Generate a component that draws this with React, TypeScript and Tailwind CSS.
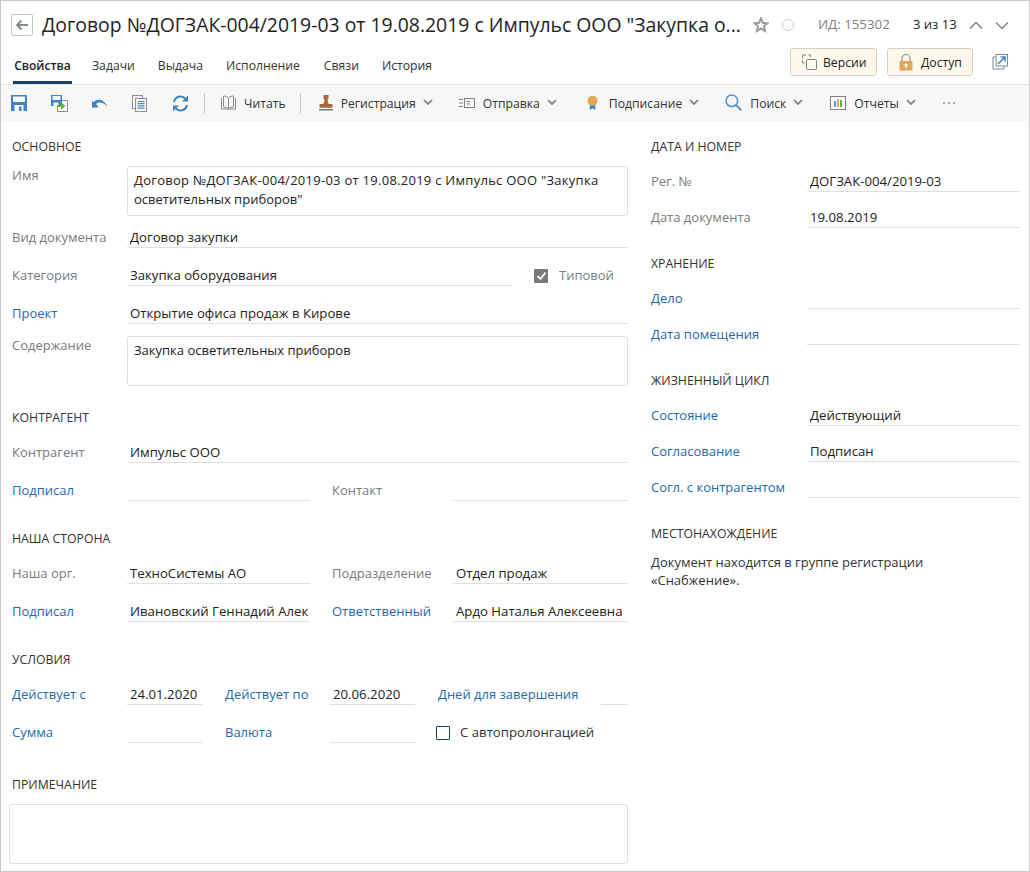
import React from "react";

const Chev = ({ className = "" }: { className?: string }) => (
  <svg width="10" height="7" viewBox="0 0 10 7" className={className}>
    <path d="M1 1.2 L5 5 L9 1.2" fill="none" stroke="#7d8790" strokeWidth="1.8" />
  </svg>
);

const Heading = ({ children, className = "" }: { children: React.ReactNode; className?: string }) => (
  <div className={`h-5 text-[12.3px] leading-[22px] text-[#333] ${className}`}>{children}</div>
);

const Label = ({ children, link, className = "" }: { children: React.ReactNode; link?: boolean; className?: string }) => (
  <div className={`shrink-0 whitespace-nowrap leading-[19px] mb-px ${link ? "text-[#1e6aa8]" : "text-[#7b7b7b]"} ${className}`}>{children}</div>
);

const Val = ({ children, className = "" }: { children?: React.ReactNode; className?: string }) => (
  <div className={`h-7 shrink-0 border-b border-[#e0e0e4] pl-[3px] pt-[8px] leading-[19px] text-[13.2px] text-[#222] whitespace-nowrap ${className}`}>{children}</div>
);

const Box = ({ children, className = "" }: { children?: React.ReactNode; className?: string }) => (
  <div className={`rounded-[3px] border border-[#dfdfe3] px-[6px] py-[4px] leading-[19px] text-[#222] ${className}`}>{children}</div>
);

const Row = ({ children, className = "" }: { children: React.ReactNode; className?: string }) => (
  <div className={`flex items-end h-7 ${className}`}>{children}</div>
);

const Tool = ({ icon, text, chev, gap, className = "" }: { icon: React.ReactNode; text: string; chev?: boolean; gap: string; className?: string }) => (
  <div className={`flex items-center text-[12.2px] text-[#333] ${className}`}>
    {icon}
    <span className={`pt-[2px] ${gap}`}>{text}</span>
    {chev && <Chev className="ml-[7px]" />}
  </div>
);

export default function App() {
  return (
    <div
      className="w-[1030px] h-[872px] overflow-hidden border border-[#c8c8c8] bg-white text-[13px] flex flex-col"
      style={{ fontFamily: '"Open Sans", "Noto Sans", sans-serif' }}
    >
      {/* Title bar */}
      <div className="h-[35px] shrink-0 flex items-center pt-[13px]">
        <div className="ml-[10px] w-[22px] h-[22px] border border-[#c4c4c4] rounded-[2px] flex items-center justify-center">
          <svg width="14" height="12" viewBox="0 0 14 12">
            <path d="M13 6 H2 M6.5 1.5 L2 6 L6.5 10.5" fill="none" stroke="#7f8890" strokeWidth="1.8" />
          </svg>
        </div>
        <div className="ml-[9px] w-[704px] text-[19.4px] leading-6 text-[#1f1f1f] whitespace-nowrap">
          Договор №ДОГЗАК-004/2019-03 от 19.08.2019 с Импульс ООО "Закупка о...
        </div>
        <svg width="16" height="16" viewBox="0 0 16 16" className="ml-[7px]">
          <path d="M8 1.6 L9.9 5.8 L14.4 6.3 L11 9.3 L12 13.9 L8 11.5 L4 13.9 L5 9.3 L1.6 6.3 L6.1 5.8 Z" fill="none" stroke="#9a9a9a" strokeWidth="2" />
        </svg>
        <div className="ml-[13px] w-[12px] h-[12px] rounded-full border border-[#c8d0d8]" />
        <div className="ml-[24px] w-[72px] text-[13.3px] whitespace-nowrap text-[#7f7f7f]">ИД: 155302</div>
        <div className="ml-[23px] w-[44px] whitespace-nowrap text-[#222]">3 из 13</div>
        <svg width="14" height="9" viewBox="0 0 14 9" className="ml-[12px]">
          <path d="M1 7.5 L7 1.5 L13 7.5" fill="none" stroke="#7d8790" strokeWidth="1.5" />
        </svg>
        <svg width="14" height="9" viewBox="0 0 14 9" className="ml-[12px]">
          <path d="M1 1.5 L7 7.5 L13 1.5" fill="none" stroke="#7d8790" strokeWidth="1.5" />
        </svg>
      </div>

      {/* Tabs */}
      <div className="h-[49px] shrink-0 flex items-start border-b border-[#e3e3e3]">
        <div className="flex ml-[12px] mt-[12px] h-[36px] text-[12.2px] text-[#333]">
          <div className="h-[36px] w-[59px] text-center leading-[36px] font-semibold text-[12px] text-[#222] border-b-[3px] border-[#17416d]">Свойства</div>
          <div className="ml-[20px] leading-[36px]">Задачи</div>
          <div className="ml-[23px] leading-[36px]">Выдача</div>
          <div className="ml-[23px] leading-[36px]">Исполнение</div>
          <div className="ml-[24px] leading-[36px]">Связи</div>
          <div className="ml-[23px] leading-[36px]">История</div>
        </div>
        <div className="ml-auto flex items-center mt-[12px] mr-[21px] text-[12.2px]">
          <div className="w-[87px] h-[28px] rounded-[3px] border border-[#d6d2c6] bg-[#fef9ec] flex items-center pl-[10px] text-[#222]">
            <svg width="17" height="16" viewBox="0 0 17 16">
              <path d="M1.5 4.5 V1 H5 M7.5 1 H9.5 V3 M1.5 6.5 V9 H3.5" fill="none" stroke="#7d8288" />
              <rect x="5.5" y="5.5" width="10" height="10" rx="1" fill="none" stroke="#7d8288" />
            </svg>
            <span className="ml-[5px] pt-[2px]">Версии</span>
          </div>
          <div className="ml-[10px] w-[86px] h-[28px] rounded-[3px] border border-[#d6d2c6] bg-[#fef9ec] flex items-center pl-[11px] text-[#222]">
            <svg width="14" height="17" viewBox="0 0 14 17">
              <path d="M3 8 V4.5 A4 4 0 0 1 11 4.5 V8" fill="none" stroke="#9a958a" strokeWidth="1.2" />
              <rect x="0.5" y="7" width="13" height="9.5" fill="#e0a95a" />
              <circle cx="7" cy="11" r="1.5" fill="#fff" />
              <rect x="6.4" y="11" width="1.2" height="3" fill="#fff" />
            </svg>
            <span className="ml-[8px] pt-[2px]">Доступ</span>
          </div>
          <svg width="16" height="16" viewBox="0 0 16 16" className="ml-[19px]">
            <path d="M3.5 3 H1 V15 H12 V12.5" fill="none" stroke="#7f8890" />
            <rect x="4" y="0.5" width="11.5" height="11.5" fill="none" stroke="#7f8890" />
            <path d="M6 10 L12.5 3.5 M8.5 3 H13 V7.5" fill="none" stroke="#3f86c5" strokeWidth="1.6" />
          </svg>
        </div>
      </div>

      {/* Toolbar */}
      <div className="h-[36px] shrink-0 bg-[#f7f7f7] flex items-center pl-[10px]">
        <svg width="16" height="16" viewBox="0 0 16 16">
          <path d="M0 0 H16 V16 H0 Z" fill="#4382bd" />
          <rect x="2" y="1.5" width="12" height="5.5" fill="#f5f8fb" />
          <rect x="3.5" y="10" width="9" height="6" fill="#f5f8fb" />
          <rect x="8" y="11.5" width="2.5" height="4.5" fill="#4382bd" />
        </svg>
        <svg width="17" height="17" viewBox="0 0 17 17" className="ml-[24px]">
          <rect x="6.5" y="5.5" width="10" height="11" fill="#fff" stroke="#8b9096" />
          <path d="M0 0 H11 V11 H0 Z" fill="#4382bd" />
          <rect x="1.5" y="1" width="8" height="4" fill="#f5f8fb" />
          <rect x="2.5" y="7.5" width="5" height="3.5" fill="#f5f8fb" />
          <path d="M6 10 H10 V7.2 L14.5 11 L10 14.8 V12 H6 Z" fill="#6bb02f" />
        </svg>
        <svg width="17" height="10" viewBox="0 0 17 10" className="ml-[23px]">
          <path d="M1 6 C4 1 11 -1 16.5 8.5 C12 4 8 3.5 5 6 L7.5 9 H1 Z" fill="#3d7fbb" />
          <path d="M1 3 V9.5 H7.5 Z" fill="#3d7fbb" />
        </svg>
        <svg width="15" height="17" viewBox="0 0 15 17" className="ml-[24px]">
          <rect x="0.5" y="0.5" width="10" height="13" fill="none" stroke="#8b9096" />
          <rect x="3.5" y="3.5" width="11" height="13" fill="#fafafa" stroke="#8b9096" />
          <path d="M5.5 6.5 H12.5 M5.5 8.7 H12.5 M5.5 10.9 H12.5 M5.5 13.1 H12.5" stroke="#4382bd" strokeWidth="1.2" />
        </svg>
        <svg width="17" height="17" viewBox="0 0 17 17" className="ml-[25px]">
          <path d="M2 7 A6.6 6.6 0 0 1 13.5 3.8" fill="none" stroke="#4382bd" strokeWidth="2" />
          <path d="M16 0.5 V6.5 H10 Z" fill="#4382bd" />
          <path d="M15 10 A6.6 6.6 0 0 1 3.5 13.2" fill="none" stroke="#4382bd" strokeWidth="2" />
          <path d="M1 16.5 V10.5 H7 Z" fill="#4382bd" />
        </svg>
        <div className="ml-[15px] w-px h-[20px] bg-[#c4c4c4]" />
        <Tool
          className="ml-[16px]"
          gap="ml-[8px]"
          icon={
            <svg width="15" height="15" viewBox="0 0 15 15">
              <path d="M7.5 3 C6 1.5 4 1 2.5 1 V12 C4 12 6 12.5 7.5 14 C9 12.5 11 12 12.5 12 V1 C11 1 9 1.5 7.5 3 Z M7.5 3 V14" fill="none" stroke="#8b8b8b" />
              <path d="M1 3 H0.5 V14 H7.5 H14.5 V3 H14" fill="none" stroke="#8b8b8b" />
            </svg>
          }
          text="Читать"
        />
        <div className="ml-[14px] w-px h-[20px] bg-[#c4c4c4]" />
        <Tool
          className="ml-[18px]"
          gap="ml-[8px]"
          icon={
            <svg width="14" height="16" viewBox="0 0 14 16">
              <path d="M4.5 0 H9.5 V4 H8.6 C8.6 7 9 8 10 9 H13.5 V12.8 H0.5 V9 H4 C5 8 5.4 7 5.4 4 H4.5 Z" fill="#a5693b" />
              <rect x="0" y="14" width="14" height="1.6" fill="#7f7f7f" />
            </svg>
          }
          text="Регистрация"
          chev
        />
        <Tool
          className="ml-[26px]"
          gap="ml-[8px]"
          icon={
            <svg width="16" height="10" viewBox="0 0 16 10">
              <rect x="5.5" y="0.5" width="10" height="9" fill="none" stroke="#7d8288" />
              <path d="M0 1.5 H4 M0 5 H4 M0 8.5 H4 M7.5 3.5 H11 M7.5 6 H11" stroke="#7d8288" />
            </svg>
          }
          text="Отправка"
          chev
        />
        <Tool
          className="ml-[30px]"
          gap="ml-[11px]"
          icon={
            <svg width="11" height="16" viewBox="0 0 12 16">
              <path d="M3 9 V16 L6 13.8 L9 16 V9 Z" fill="#3f86c5" />
              <circle cx="6" cy="5.5" r="5.5" fill="#e0a95a" />
            </svg>
          }
          text="Подписание"
          chev
        />
        <Tool
          className="ml-[26px]"
          gap="ml-[8px]"
          icon={
            <svg width="17" height="17" viewBox="0 0 17 17">
              <circle cx="6.8" cy="6.8" r="5.8" fill="none" stroke="#4f8ec7" strokeWidth="1.5" />
              <path d="M11 11 L16.3 16.3" stroke="#4f8ec7" strokeWidth="1.8" />
            </svg>
          }
          text="Поиск"
          chev
        />
        <Tool
          className="ml-[27px]"
          gap="ml-[8px]"
          icon={
            <svg width="16" height="14" viewBox="0 0 16 14">
              <rect x="0.5" y="0.5" width="15" height="13" fill="#fff" stroke="#7d8288" />
              <rect x="4" y="5" width="2" height="6" fill="#5b9bd5" />
              <rect x="7" y="3" width="2" height="8" fill="#e0a95a" />
              <rect x="10" y="4" width="2" height="7" fill="#6bb02f" />
            </svg>
          }
          text="Отчеты"
          chev
        />
        <div className="ml-[27px] flex gap-[3px]">
          <span className="w-[2px] h-[2px] bg-[#8b8b8b] rounded-full" />
          <span className="w-[2px] h-[2px] bg-[#8b8b8b] rounded-full" />
          <span className="w-[2px] h-[2px] bg-[#8b8b8b] rounded-full" />
        </div>
      </div>

      {/* Body */}
      <div className="flex-1 flex min-h-0">
        {/* Left column */}
        <div className="w-[627px] shrink-0 pl-[11px] pt-[15px]">
          <Heading>ОСНОВНОЕ</Heading>
          <div className="flex mt-[10px] h-[50px]">
            <Label className="w-[115px]">Имя</Label>
            <Box className="w-[501px] h-[50px] whitespace-nowrap">
              <span className="block tracking-[0.27px]">Договор №ДОГЗАК-004/2019-03 от 19.08.2019 с Импульс ООО "Закупка</span>
              <span className="block">осветительных приборов"</span>
            </Box>
          </div>
          <Row className="mt-[4px]">
            <Label className="w-[115px]">Вид документа</Label>
            <Val className="w-[501px]">Договор закупки</Val>
          </Row>
          <Row className="mt-[10px]">
            <Label className="w-[115px]">Категория</Label>
            <Val className="w-[386px]">Закупка оборудования</Val>
            <div className="ml-[21px] mb-[3px] w-[14px] h-[14px] bg-[#7a7a7a] rounded-[1px] flex items-center justify-center">
              <svg width="11" height="10" viewBox="0 0 11 10">
                <path d="M1.5 5 L4.5 8 L9.5 1.5" fill="none" stroke="#fff" strokeWidth="1.8" />
              </svg>
            </div>
            <span className="ml-[11px] mb-px leading-[19px] text-[#7b7b7b]">Типовой</span>
          </Row>
          <Row className="mt-[10px]">
            <Label link className="w-[115px]">Проект</Label>
            <Val className="w-[501px]">Открытие офиса продаж в Кирове</Val>
          </Row>
          <div className="flex mt-[12px] h-[50px]">
            <Label className="w-[115px]">Содержание</Label>
            <Box className="w-[501px] h-[50px]">Закупка осветительных приборов</Box>
          </div>

          <Heading className="mt-[21px]">КОНТРАГЕНТ</Heading>
          <Row className="mt-[8px]">
            <Label className="w-[115px]">Контрагент</Label>
            <Val className="w-[501px]">Импульс ООО</Val>
          </Row>
          <Row className="mt-[10px]">
            <Label link className="w-[115px]">Подписал</Label>
            <Val className="w-[183px]" />
            <Label className="ml-[22px] w-[121px]">Контакт</Label>
            <Val className="w-[175px]" />
          </Row>

          <Heading className="mt-[27px]">НАША СТОРОНА</Heading>
          <Row className="mt-[8px]">
            <Label className="w-[115px]">Наша орг.</Label>
            <Val className="w-[183px]">ТехноСистемы АО</Val>
            <Label className="ml-[22px] w-[121px]">Подразделение</Label>
            <Val className="w-[175px]">Отдел продаж</Val>
          </Row>
          <Row className="mt-[10px]">
            <Label link className="w-[115px]">Подписал</Label>
            <Val className="w-[183px]">Ивановский Геннадий Алек</Val>
            <Label link className="ml-[22px] w-[121px]">Ответственный</Label>
            <Val className="w-[175px]">Ардо Наталья Алексеевна</Val>
          </Row>

          <Heading className="mt-[27px]">УСЛОВИЯ</Heading>
          <Row className="mt-[8px]">
            <Label link className="w-[115px]">Действует с</Label>
            <Val className="w-[75px]">24.01.2020</Val>
            <Label link className="ml-[23px] w-[105px]">Действует по</Label>
            <Val className="w-[85px]">20.06.2020</Val>
            <Label link className="ml-[23px] w-[163px]">Дней для завершения</Label>
            <Val className="w-[27px]" />
          </Row>
          <Row className="mt-[10px]">
            <Label link className="w-[115px]">Сумма</Label>
            <Val className="w-[75px]" />
            <Label link className="ml-[23px] w-[105px]">Валюта</Label>
            <Val className="w-[85px]" />
            <div className="ml-[21px] mb-[3px] w-[14px] h-[14px] rounded-[1px] border border-[#17416d] bg-white" />
            <span className="ml-[10px] mb-px leading-[19px] text-[13.2px] text-[#333]">С автопролонгацией</span>
          </Row>

          <Heading className="mt-[31px]">ПРИМЕЧАНИЕ</Heading>
          <Box className="mt-[10px] ml-[-3px] w-[619px] h-[60px]" />
        </div>

        {/* Right column */}
        <div className="ml-[23px] w-[369px] pt-[15px]">
          <Heading>ДАТА И НОМЕР</Heading>
          <Row className="mt-[8px]">
            <Label className="w-[156px]">Рег. №</Label>
            <Val className="w-[213px]">ДОГЗАК-004/2019-03</Val>
          </Row>
          <Row className="mt-[8px]">
            <Label className="w-[156px]">Дата документа</Label>
            <Val className="w-[213px]">19.08.2019</Val>
          </Row>

          <Heading className="mt-[25px]">ХРАНЕНИЕ</Heading>
          <Row className="mt-[8px]">
            <Label link className="w-[156px]">Дело</Label>
            <Val className="w-[213px]" />
          </Row>
          <Row className="mt-[8px]">
            <Label link className="w-[156px]">Дата помещения</Label>
            <Val className="w-[213px]" />
          </Row>

          <Heading className="mt-[25px]">ЖИЗНЕННЫЙ ЦИКЛ</Heading>
          <Row className="mt-[8px]">
            <Label link className="w-[156px]">Состояние</Label>
            <Val className="w-[213px]">Действующий</Val>
          </Row>
          <Row className="mt-[8px]">
            <Label link className="w-[156px]">Согласование</Label>
            <Val className="w-[213px]">Подписан</Val>
          </Row>
          <Row className="mt-[8px]">
            <Label link className="w-[156px]">Согл. с контрагентом</Label>
            <Val className="w-[213px]" />
          </Row>

          <Heading className="mt-[25px]">МЕСТОНАХОЖДЕНИЕ</Heading>
          <div className="mt-[10px] w-[300px] leading-[18px] text-[#333]">
            Документ находится в группе регистрации «Снабжение».
          </div>
        </div>
      </div>
    </div>
  );
}
